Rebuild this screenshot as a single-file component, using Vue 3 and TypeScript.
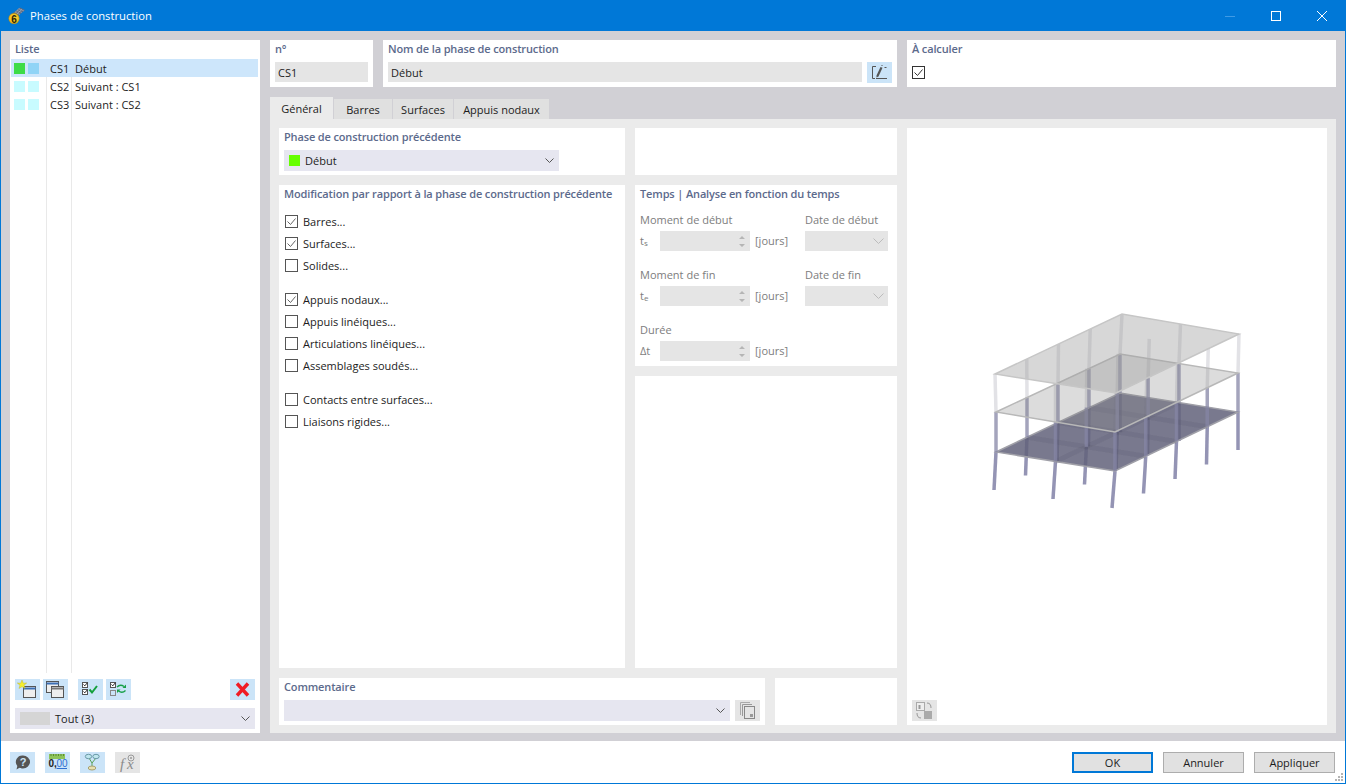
<script setup lang="ts">
type P = [number, number]
const rows = [
  { id: 'CS1', name: 'Début', sel: true },
  { id: 'CS2', name: 'Suivant : CS1', sel: false },
  { id: 'CS3', name: 'Suivant : CS2', sel: false },
]
const groups = [
  [
    { t: 'Barres...', c: true },
    { t: 'Surfaces...', c: true },
    { t: 'Solides...', c: false },
  ],
  [
    { t: 'Appuis nodaux...', c: true },
    { t: 'Appuis linéiques...', c: false },
    { t: 'Articulations linéiques...', c: false },
    { t: 'Assemblages soudés...', c: false },
  ],
  [
    { t: 'Contacts entre surfaces...', c: false },
    { t: 'Liaisons rigides...', c: false },
  ],
]
const tabs = ['Général', 'Barres', 'Surfaces', 'Appuis nodaux']

// panel origin of the 3D view
const ox = 907
const oy = 128
// corners: left, back, right, front
const levels: P[][] = [
  [[994, 490], [1120, 432], [1238, 450], [1112, 508]],
  [[996, 452], [1120, 393], [1238, 412], [1115, 471]],
  [[996, 412], [1120, 354], [1238, 373], [1115, 432]],
  [[995, 374], [1122, 314], [1239, 334], [1116, 393]],
]
function bil(q: P[], u: number, v: number): P {
  const ax = q[0][0] + (q[3][0] - q[0][0]) * u
  const ay = q[0][1] + (q[3][1] - q[0][1]) * u
  const bx = q[1][0] + (q[2][0] - q[1][0]) * u
  const by = q[1][1] + (q[2][1] - q[1][1]) * u
  return [ax + (bx - ax) * v - ox, ay + (by - ay) * v - oy]
}
const cols: { a: P; b: P; c: P; d: P }[] = []
for (const u of [0, 0.5, 1]) {
  for (const v of [0, 0.25, 0.5, 0.75, 1]) {
    cols.push({
      a: bil(levels[0], u, v),
      b: bil(levels[1], u, v),
      c: bil(levels[2], u, v),
      d: bil(levels[3], u, v),
    })
  }
}
const bands: { p: P; q: P }[] = [{ p: bil(levels[1], 0.5, 0), q: bil(levels[1], 0.5, 1) }]
for (const v of [0.25, 0.5, 0.75]) bands.push({ p: bil(levels[1], 0, v), q: bil(levels[1], 1, v) })
const quad = (q: P[]) => q.map((p) => `${p[0] - ox},${p[1] - oy}`).join(' ')
const plateBot = quad(levels[1])
const plateMid = quad(levels[2])
const plateTop = quad(levels[3])
</script>

<template>
  <div class="window">
    <header class="titlebar">
      <svg class="appicon" width="18" height="18" viewBox="0 0 18 18">
        <path d="M5 6 L12 .5 L17 3 L10 9 Z" fill="#5f6b80" />
        <path d="M7 5 L12 7.500 M9 3.500 L14 5.500 M11 2 L16 4 M9 7 L14 2 M7 5.500 L11.500 1" stroke="#aab2c0" stroke-width="0.6" />
        <circle cx="6" cy="11.500" r="5.200" fill="#f5c526" stroke="#a87f10" stroke-width="0.6" />
        <text x="6" y="15.500" text-anchor="middle" class="six">6</text>
      </svg>
      <span class="title">Phases de construction</span>
      <span class="winbtn min"><svg width="12" height="12" viewBox="0 0 12 12"><path d="M1 6.500H11" stroke="#3f9be6" /></svg></span>
      <span class="winbtn"><svg width="12" height="12" viewBox="0 0 12 12"><rect x="1.500" y="1.500" width="9" height="9" fill="none" stroke="#fff" /></svg></span>
      <span class="winbtn"><svg width="12" height="12" viewBox="0 0 12 12"><path d="M1 1L11 11M11 1L1 11" stroke="#fff" /></svg></span>
    </header>

    <main class="body">
      <aside class="listpanel">
        <div class="hd listhd">Liste</div>
        <div class="listrows">
          <div v-for="r in rows" :key="r.id" class="lrow" :class="{ sel: r.sel }">
            <span class="swcell">
              <i class="sw" :class="r.sel ? 'green' : 'cyan'"></i>
              <i class="sw" :class="r.sel ? 'blue' : 'cyan'"></i>
            </span>
            <span class="idcell">{{ r.id }}</span>
            <span class="namecell">{{ r.name }}</span>
          </div>
        </div>
        <div class="listtools">
          <button class="ib">
            <svg width="21" height="19" viewBox="0 0 21 19">
              <rect x="6.500" y="6.500" width="12" height="11" fill="#eeeeee" stroke="#555" />
              <path d="M6.500 8.500H18.500" stroke="#3b6fb5" stroke-width="2" />
              <path d="M5 0L6.300 3.200 9.700 3 7 5.200 8 8.500 5 6.600 2 8.500 3 5.200 .3 3 3.700 3.200Z" fill="#f5ee2e" stroke="#b0a820" stroke-width=".4" />
            </svg>
          </button>
          <button class="ib">
            <svg width="21" height="19" viewBox="0 0 21 19">
              <rect x="1.500" y="1.500" width="12" height="11" fill="#eeeeee" stroke="#555" />
              <path d="M1.500 3.500H13.500" stroke="#3b6fb5" stroke-width="2" />
              <rect x="6.500" y="6.500" width="12" height="11" fill="#eeeeee" stroke="#555" />
              <path d="M6.500 8.500H18.500" stroke="#777" stroke-width="2" />
            </svg>
          </button>
          <button class="ib gap1">
            <svg width="21" height="19" viewBox="0 0 21 19">
              <rect x="2.500" y="2.500" width="5" height="5" fill="#fff" stroke="#555" />
              <rect x="2.500" y="9.500" width="5" height="5" fill="#fff" stroke="#555" />
              <path d="M3.500 4.500l1.300 1.300 2.600-3M3.500 11.500l1.300 1.300 2.600-3" fill="none" stroke="#222" />
              <path d="M9.500 9.500l2.500 3 5-6.500" fill="none" stroke="#14a03c" stroke-width="2" />
            </svg>
          </button>
          <button class="ib">
            <svg width="21" height="19" viewBox="0 0 21 19">
              <rect x="2.500" y="2.500" width="5" height="5" fill="#fff" stroke="#555" />
              <rect x="2.500" y="10.500" width="5" height="5" fill="none" stroke="#888" />
              <path d="M3.500 4.500l1.300 1.300 2.600-3" fill="none" stroke="#222" />
              <path d="M9 7c2-2 5-2 7-.5M17.500 10.500c-2 2-5 2-7 .5" fill="none" stroke="#18a048" stroke-width="1.400" />
              <path d="M18 4.500v3.500h-3.500zM9 13v-3.500h3.500z" fill="#18a048" />
            </svg>
          </button>
          <span class="grow"></span>
          <button class="ib">
            <svg width="21" height="19" viewBox="0 0 21 19"><path d="M5 3.500L16 15.500M16 3.500L5 15.500" stroke="#f01c24" stroke-width="3.400" /></svg>
          </button>
        </div>
        <div class="combo allcombo">
          <i class="allsw"></i>
          <span class="combotext">Tout (3)</span>
          <svg class="chev" width="9" height="5" viewBox="0 0 9 5"><path d="M.5 .5L4.500 4.500L8.500 .5" fill="none" stroke="#555" /></svg>
        </div>
      </aside>

      <section class="rightcol">
        <div class="headrow">
          <div class="card nocard">
            <div class="hd">n°</div>
            <div class="field">CS1</div>
          </div>
          <div class="card namecard">
            <div class="hd">Nom de la phase de construction</div>
            <div class="fieldrow">
              <div class="field wide">Début</div>
              <button class="ib edit">
                <svg width="25" height="21" viewBox="0 0 25 21">
                  <path d="M9 4.500H5.500V16.500H8" fill="none" stroke="#555" />
                  <path d="M9 16.500H20" stroke="#555" />
                  <path d="M13.500 5L15.500 5.800L11.500 14.500L9.500 15.500L9.500 13.500Z" fill="#555" />
                  <path d="M14.500 3.500H15.500M17.500 5.500H19.500" stroke="#555" />
                </svg>
              </button>
            </div>
          </div>
          <div class="card calccard">
            <div class="hd">À calculer</div>
            <span class="cb dark calcb">
              <svg width="11" height="11" viewBox="0 0 11 11"><path d="M1.500 5.500L4.500 8.500L9.500 2.500" fill="none" stroke="#333" /></svg>
            </span>
          </div>
        </div>

        <nav class="tabstrip">
          <span v-for="(t, i) in tabs" :key="t" class="tab" :class="['t' + i, { active: i === 0 }]">{{ t }}</span>
        </nav>

        <div class="tabbody">
          <div class="leftarea">
            <div class="card prevcard">
              <div class="hd">Phase de construction précédente</div>
              <div class="combo prevcombo">
                <i class="limesw"></i>
                <span class="combotext">Début</span>
                <svg class="chev" width="9" height="5" viewBox="0 0 9 5"><path d="M.5 .5L4.500 4.500L8.500 .5" fill="none" stroke="#555" /></svg>
              </div>
            </div>
            <div class="card blanktop"></div>

            <div class="card modcard">
              <div class="hd">Modification par rapport à la phase de construction précédente</div>
              <div class="groups">
                <div v-for="(g, gi) in groups" :key="gi" class="grp">
                  <label v-for="it in g" :key="it.t" class="chk">
                    <span class="cb">
                      <svg v-if="it.c" width="11" height="11" viewBox="0 0 11 11"><path d="M1.500 5.500L4.500 8.500L9.500 2.500" fill="none" stroke="#666" /></svg>
                    </span>
                    <span>{{ it.t }}</span>
                  </label>
                </div>
              </div>
            </div>

            <div class="card timecard">
              <div class="hd">Temps | Analyse en fonction du temps</div>
              <div class="timegrid">
                <div class="tl">Moment de début</div>
                <div class="tl">Date de début</div>
                <div class="tf">
                  <span class="sym">t<sub>s</sub></span>
                  <span class="spin"><svg width="8" height="13" viewBox="0 0 8 13"><path d="M4 1L7 4H1ZM4 12L1 9H7Z" fill="#b5b5b5" /></svg></span>
                  <span class="unit">[jours]</span>
                </div>
                <div class="dcombo"><svg width="11" height="6" viewBox="0 0 11 6"><path d="M.5 .5L5.500 5.500L10.500 .5" fill="none" stroke="#bcbcbc" /></svg></div>
                <div class="tl">Moment de fin</div>
                <div class="tl">Date de fin</div>
                <div class="tf">
                  <span class="sym">t<sub>e</sub></span>
                  <span class="spin"><svg width="8" height="13" viewBox="0 0 8 13"><path d="M4 1L7 4H1ZM4 12L1 9H7Z" fill="#b5b5b5" /></svg></span>
                  <span class="unit">[jours]</span>
                </div>
                <div class="dcombo"><svg width="11" height="6" viewBox="0 0 11 6"><path d="M.5 .5L5.500 5.500L10.500 .5" fill="none" stroke="#bcbcbc" /></svg></div>
                <div class="tl">Durée</div>
                <div></div>
                <div class="tf">
                  <span class="sym">Δt</span>
                  <span class="spin"><svg width="8" height="13" viewBox="0 0 8 13"><path d="M4 1L7 4H1ZM4 12L1 9H7Z" fill="#b5b5b5" /></svg></span>
                  <span class="unit">[jours]</span>
                </div>
                <div></div>
              </div>
            </div>
            <div class="card blankmid"></div>

            <div class="commentrow">
              <div class="card commentcard">
                <div class="hd">Commentaire</div>
                <div class="fieldrow">
                  <div class="combo commentcombo">
                    <svg class="chev" width="9" height="5" viewBox="0 0 9 5"><path d="M.5 .5L4.500 4.500L8.500 .5" fill="none" stroke="#555" /></svg>
                  </div>
                  <button class="ib gray">
                    <svg width="19" height="19" viewBox="0 0 19 19">
                      <path d="M2.500 14V1.500H12" fill="none" stroke="#aaa" />
                      <path d="M4.500 15V3.500H14" fill="none" stroke="#999" />
                      <rect x="6.500" y="5.500" width="10" height="12" fill="#e5e5e5" stroke="#888" />
                      <rect x="12" y="13" width="3" height="3" fill="#999" />
                    </svg>
                  </button>
                </div>
              </div>
              <div class="card commentblank"></div>
            </div>
          </div>

          <div class="card viewcard">
            <svg class="model" width="420" height="597" viewBox="0 0 420 597">
              <defs>
                <filter id="soft" x="-5%" y="-5%" width="110%" height="110%">
                  <feGaussianBlur stdDeviation="0.45" />
                </filter>
              </defs>
              <g filter="url(#soft)">
                <g v-for="(c, i) in cols" :key="'a' + i">
                  <line :x1="c.a[0]" :y1="c.a[1]" :x2="c.b[0]" :y2="c.b[1]" stroke="#9494b4" stroke-width="3.500" />
                  <line :x1="c.c[0]" :y1="c.c[1]" :x2="c.d[0]" :y2="c.d[1]" stroke="#e2e2e6" stroke-width="3.500" />
                </g>
                <polygon :points="plateBot" fill="#62627a" fill-opacity=".85" stroke="#a0a0a8" stroke-width="1.500" />
                <line v-for="(b, i) in bands" :key="'g' + i" :x1="b.p[0]" :y1="b.p[1]" :x2="b.q[0]" :y2="b.q[1]" stroke="#4a4a5e" stroke-width="5" stroke-opacity=".12" />
                <g v-for="(c, i) in cols" :key="'b' + i">
                  <line :x1="c.b[0]" :y1="c.b[1]" :x2="c.c[0]" :y2="c.c[1]" stroke="#8585a6" stroke-width="3.500" stroke-opacity=".75" />
                </g>
                <polygon :points="plateMid" fill="#8c8c8c" fill-opacity=".3" stroke="#b8b8b8" stroke-width="1.500" />
                <polygon :points="plateTop" fill="#a0a0a0" fill-opacity=".42" stroke="#c6c6c6" stroke-width="1.500" />
              </g>
            </svg>
            <button class="ib gray viewbtn">
              <svg width="19" height="19" viewBox="0 0 19 19">
                <rect x="1.500" y="1.500" width="8" height="8" fill="#eee" stroke="#aaa" />
                <rect x="3.500" y="4" width="2" height="4" fill="#999" />
                <path d="M12 2c3 0 4 2 4 5M6 17c-3 0-4-2-4-5" fill="none" stroke="#999" />
                <rect x="9" y="10" width="8" height="8" fill="#aaa" />
              </svg>
            </button>
          </div>
        </div>
      </section>
    </main>

    <footer class="footer">
      <button class="ib">
        <svg width="21" height="19" viewBox="0 0 21 19">
          <path d="M11 2.500a7 6.500 0 0 1 0 13c-1.500 0-2.500-.2-3.500-.8L4.500 16.500l.8-3.500a6.500 6.500 0 0 1 5.700-10.500z" fill="#555" />
          <text x="11" y="13" text-anchor="middle" class="qm">?</text>
        </svg>
      </button>
      <button class="ib">
        <svg width="21" height="19" viewBox="0 0 21 19">
          <rect x="2" y="1" width="16" height="5" fill="#8ec45a" />
          <path d="M4 1v2M6.500 1v2M9 1v2M11.500 1v2M14 1v2M16.500 1v2" stroke="#5d8c34" />
          <text x="1.500" y="14" class="num">0,</text>
          <text x="9.500" y="14" class="num blue">00</text>
          <path d="M9.500 15.500H20" stroke="#2f6fd0" />
        </svg>
      </button>
      <button class="ib">
        <svg width="21" height="19" viewBox="0 0 21 19">
          <path d="M7 5L10 10M14 5L10 10V14" fill="none" stroke="#58a058" />
          <ellipse cx="6.500" cy="3.500" rx="3.200" ry="2.200" fill="#bfe6ee" stroke="#6a9aa8" />
          <ellipse cx="14" cy="3.500" rx="3.200" ry="2.200" fill="#bfe6ee" stroke="#6a9aa8" />
          <ellipse cx="10" cy="15" rx="3.800" ry="2" fill="#e6dfae" stroke="#a8a070" />
        </svg>
      </button>
      <button class="ib gray">
        <svg width="21" height="19" viewBox="0 0 21 19">
          <text x="3" y="16" class="fx">f</text>
          <text x="10" y="16" class="fx">x</text>
          <circle cx="14" cy="5" r="3" fill="none" stroke="#999" />
          <circle cx="14" cy="5" r="1" fill="#999" />
        </svg>
      </button>
      <span class="grow"></span>
      <button class="btn default">OK</button>
      <button class="btn">Annuler</button>
      <button class="btn">Appliquer</button>
      <svg class="grip" width="9" height="9" viewBox="0 0 9 9">
        <path d="M6 0h2v2H6zM3 3h2v2H3zM6 3h2v2H6zM0 6h2v2H0zM3 6h2v2H3zM6 6h2v2H6z" fill="#b4b4b4" />
      </svg>
    </footer>
  </div>
</template>

<style>
html, body { margin: 0; padding: 0; background: #fff; }
</style>

<style scoped>
.window {
  width: 1346px;
  height: 784px;
  box-sizing: border-box;
  border: 1px solid #0078d7;
  border-top: 0;
  display: flex;
  flex-direction: column;
  font-family: "Open Sans", "Noto Sans", sans-serif;
  font-size: 11px;
  color: #1c1c1c;
  background: #fff;
  overflow: hidden;
  position: relative;
}
.titlebar {
  height: 31px;
  flex: none;
  background: #0078d7;
  margin: 0 -1px;
  display: flex;
  align-items: center;
  color: #fff;
  padding: 0 1px 0 8px;
}
.appicon { flex: none; margin-right: 4px; }
.six { font: 700 10px "Liberation Sans", sans-serif; fill: #2e2408; }
.title { font-size: 11.250px; flex: 1; }
.winbtn { width: 46px; height: 31px; display: flex; align-items: center; justify-content: center; }
.body {
  flex: 1;
  min-height: 0;
  background: #d1d0d5;
  padding: 9px 9px 8px 9px;
  display: flex;
  gap: 10px;
}
.listpanel {
  width: 250px;
  background: #fff;
  display: flex;
  flex-direction: column;
  flex: none;
}
.hd {
  font-weight: 600;
  color: #5c6a8c;
  white-space: nowrap;
  height: 22px;
  line-height: 17px;
  letter-spacing: -0.14px;
}
.listhd { padding: 0 5px; height: 19px; line-height: 18px; }
.listrows {
  flex: 1;
  margin: 0 1px;
  background:
    linear-gradient(#e9e9e9, #e9e9e9) 35px 0 / 1px 100% no-repeat,
    linear-gradient(#e9e9e9, #e9e9e9) 60px 0 / 1px 100% no-repeat;
}
.lrow { height: 18px; display: flex; align-items: center; }
.lrow.sel { background: #cde6fb; margin-right: 1px; }
.swcell { width: 36px; display: flex; gap: 3px; padding-left: 3px; box-sizing: border-box; }
.sw { width: 11px; height: 11px; display: block; }
.green { background: #3edc47; }
.blue { background: #90d4f6; }
.cyan { background: #c8fbff; }
.idcell { width: 25px; padding-left: 3px; box-sizing: border-box; }
.namecell { padding-left: 3px; }
.listtools {
  display: flex;
  height: 21px;
  padding: 6px 5px 8px;
  gap: 3px;
  flex: none;
}
.gap1 { margin-left: 7px; }
.grow { flex: 1; }
.ib {
  width: 25px;
  height: 21px;
  padding: 0;
  border: 0;
  background: #cbe4f8;
  display: flex;
  align-items: center;
  justify-content: center;
  flex: none;
}
.ib.gray { background: #e5e5e5; }
.combo {
  background: #e6e6f0;
  height: 21px;
  display: flex;
  align-items: center;
  position: relative;
}
.combotext { flex: 1; }
.chev { margin-right: 5px; flex: none; }
.allcombo { margin: 0 5px 4px; }
.allsw { width: 30px; height: 13px; background: #d5d5d5; margin: 0 5px; display: block; }
.rightcol { flex: 1; min-width: 0; display: flex; flex-direction: column; }
.headrow { display: flex; gap: 10px; height: 47px; flex: none; }
.card { background: #fff; box-sizing: border-box; }
.nocard, .namecard, .calccard, .prevcard, .commentcard { padding: 0 5px; }
.nocard { width: 103px; }
.namecard { width: 514px; }
.calccard { flex: 1; }
.field {
  height: 20px;
  background: #e5e5e5;
  line-height: 22px;
  padding: 0 3px;
}
.fieldrow { display: flex; gap: 5px; }
.wide { flex: 1; }
.cb {
  width: 13px;
  height: 13px;
  box-sizing: border-box;
  border: 1px solid #555;
  background: #fff;
  display: flex;
  align-items: center;
  justify-content: center;
  flex: none;
}
.cb.dark { border-color: #333; }
.calcb { margin-top: 4px; }
.tabstrip { height: 22px; margin-top: 10px; display: flex; align-items: flex-end; gap: 1px; flex: none; }
.tab {
  height: 20px;
  background: #e0e0e0;
  display: flex;
  align-items: center;
  justify-content: center;
  box-sizing: border-box;
}
.tab.active { height: 22px; background: #ebebeb; }
.t0 { width: 63px; }
.t1 { width: 58px; }
.t2 { width: 60px; }
.t3 { width: 95px; }
.tabbody {
  flex: 1;
  min-height: 0;
  background: #ebebeb;
  padding: 9px 9px 8px;
  display: flex;
  gap: 10px;
}
.leftarea {
  width: 618px;
  flex: none;
  display: grid;
  grid-template-columns: 346px 262px;
  grid-template-rows: 47px 181px 292px 47px;
  gap: 10px;
}
.modcard { grid-column: 1; grid-row: 2 / 4; padding: 0 5px; }
.prevcard { grid-column: 1; grid-row: 1; }
.blanktop { grid-column: 2; grid-row: 1; }
.timecard { grid-column: 2; grid-row: 2; padding: 0 5px; }
.blankmid { grid-column: 2; grid-row: 3; }
.commentrow { grid-column: 1 / 3; grid-row: 4; display: flex; gap: 10px; }
.prevcombo { width: 275px; }
.limesw { width: 11px; height: 11px; background: #66ff00; margin: 0 5px; display: block; }
.groups { display: flex; flex-direction: column; gap: 12px; padding: 3px 0 0 1px; }
.grp { display: flex; flex-direction: column; }
.chk { height: 22px; display: flex; align-items: center; gap: 5px; }
.timegrid {
  display: grid;
  grid-template-columns: 165px 83px;
  grid-template-rows: 21px 20px 35px 20px 35px 20px;
  margin-top: 3px;
  color: #7d7d7d;
}
.tl { height: 21px; line-height: 20px; align-self: end; }
.tf { display: flex; align-items: center; height: 20px; }
.sym { width: 20px; flex: none; padding-bottom: 2px; box-sizing: border-box; }
.sym sub { font-size: 8px; vertical-align: -1px; line-height: 0; }
.spin {
  width: 90px;
  height: 20px;
  background: #e5e5e5;
  display: flex;
  align-items: center;
  justify-content: flex-end;
  padding-right: 4px;
  box-sizing: border-box;
  flex: none;
}
.unit { margin-left: 5px; padding-bottom: 2px; }
.dcombo {
  background: #e5e5e5;
  height: 20px;
  display: flex;
  align-items: center;
  justify-content: flex-end;
  padding-right: 4px;
  box-sizing: border-box;
}
.commentcard { width: 486px; }
.commentcombo { flex: 1; justify-content: flex-end; }
.commentblank { flex: 1; }
.viewcard { flex: 1; position: relative; }
.model { display: block; }
.viewbtn { position: absolute; left: 5px; top: 572px; }
.footer {
  height: 42px;
  flex: none;
  background: #fff;
  display: flex;
  align-items: center;
  padding: 0 10px 0 9px;
  gap: 10px;
  position: relative;
}
.qm { font: 700 11px "Liberation Sans", sans-serif; fill: #cbe4f8; }
.num { font: 700 10px "Liberation Sans", sans-serif; fill: #222; }
.num.blue { fill: #2f6fd0; font-weight: 400; }
.fx { font: italic 15px "Liberation Serif", serif; fill: #8a8a8a; }
.btn {
  width: 81px;
  height: 21px;
  box-sizing: border-box;
  background: #e1e1e1;
  border: 1px solid #adadad;
  font: inherit;
  color: #1c1c1c;
  padding: 0;
  margin-top: 1px;
}
.btn.default { border: 2px solid #0078d7; }
.grip { position: absolute; right: 1px; bottom: 1px; }
</style>
